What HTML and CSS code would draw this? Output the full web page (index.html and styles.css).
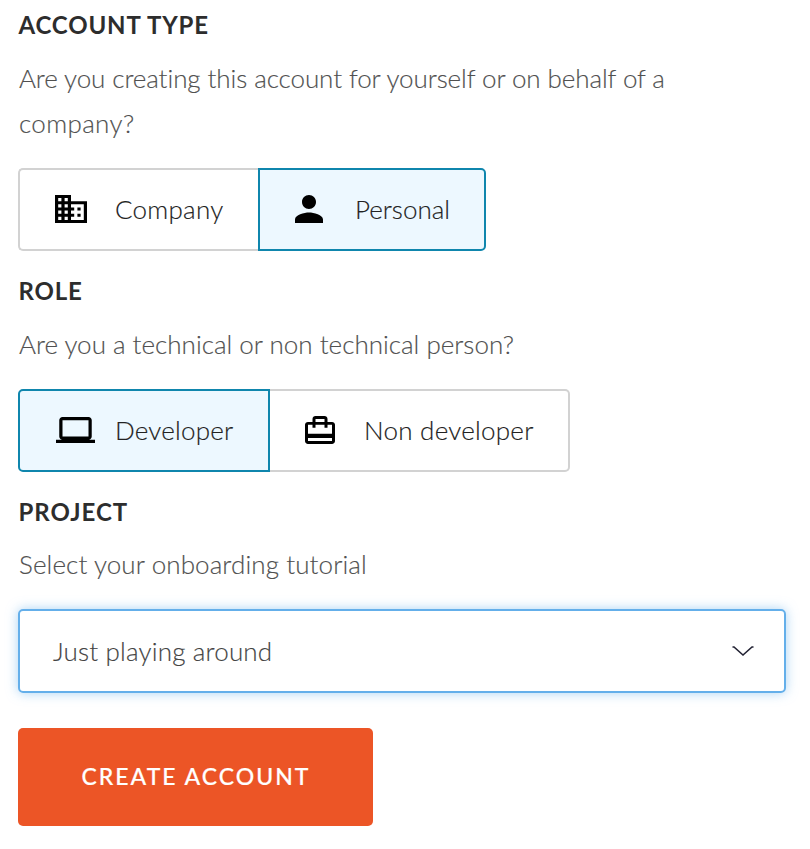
FILE: index.html
```
<!DOCTYPE html>
<html lang="en">
<head>
<meta charset="utf-8">
<title>Create account</title>
<link rel="stylesheet" href="styles.css">
</head>
<body>
<form class="signup">
  <section class="group">
    <h2 class="t-account">ACCOUNT TYPE</h2>
    <p><span class="t-q1">Are you creating this account for yourself or on behalf of a</span><br><span class="t-q2">company?</span></p>
    <div class="options">
      <div class="option company">
        <svg class="icon" width="32" height="28" viewBox="2 3 20 18" preserveAspectRatio="none"><path d="M12 7V3H2v18h20V7H12zM6 19H4v-2h2v2zm0-4H4v-2h2v2zm0-4H4V9h2v2zm0-4H4V5h2v2zm4 12H8v-2h2v2zm0-4H8v-2h2v2zm0-4H8V9h2v2zm0-4H8V5h2v2zm10 12h-8v-2h2v-2h-2v-2h2v-2h-2V9h8v10zm-2-8h-2v2h2v-2zm0 4h-2v2h2v-2z"/></svg>
        <span class="t-company">Company</span>
      </div>
      <div class="option personal selected">
        <svg class="icon" width="28" height="28" viewBox="4 4 16 16"><path d="M12 12c2.210 0 4-1.790 4-4s-1.790-4-4-4-4 1.790-4 4 1.790 4 4 4zm0 2c-2.670 0-8 1.340-8 4v2h16v-2c0-2.660-5.330-4-8-4z"/></svg>
        <span class="t-personal">Personal</span>
      </div>
    </div>
  </section>
  <section class="group">
    <h2 class="t-role">ROLE</h2>
    <p><span class="t-q3">Are you a technical or non technical person?</span></p>
    <div class="options">
      <div class="option developer selected">
        <svg class="icon" width="39" height="26" viewBox="0 4 24 16" preserveAspectRatio="none"><path d="M20 18c1.100 0 1.990-.9 1.990-2L22 6c0-1.100-.9-2-2-2H4c-1.100 0-2 .9-2 2v10c0 1.100.9 2 2 2H0v2h24v-2h-4zM4 6h16v10H4V6z"/></svg>
        <span class="t-dev">Developer</span>
      </div>
      <div class="option nondev">
        <svg class="icon" width="30" height="28" viewBox="2 2 20 19" preserveAspectRatio="none"><path d="M20 6h-3V4c0-1.110-.89-2-2-2H9c-1.110 0-2 .89-2 2v2H4c-1.110 0-2 .89-2 2v11c0 1.110.89 2 2 2h16c1.110 0 2-.89 2-2V8c0-1.110-.89-2-2-2zM9 4h6v2H9V4zm11 15H4v-2h16v2zm0-5H4V8h3v2h2V8h6v2h2V8h3v6z"/></svg>
        <span class="t-nondev">Non developer</span>
      </div>
    </div>
  </section>
  <section class="group project">
    <h2 class="t-project">PROJECT</h2>
    <p><span class="t-q4">Select your onboarding tutorial</span></p>
    <div class="select">
      <span class="t-select">Just playing around</span>
      <svg class="chevron" width="22" height="12" viewBox="0 0 22 12"><path d="M.5 2H2L11 10l9-8h1.500"/></svg>
    </div>
  </section>
  <button type="button" class="submit"><span class="t-create">CREATE ACCOUNT</span></button>
</form>
</body>
</html>
```
FILE: styles.css
```
* { box-sizing: border-box; }
body { margin: 0; background: #fff; color: #2d2d2d; font-family: Lato, sans-serif; }
.signup { padding: 2px 24px 0 18px; }
.group { margin-bottom: 17px; }
h2 { margin: 0; height: 46px; padding-left: .5px; line-height: 46px; font-size: 24px; font-weight: 700; letter-spacing: .85px; }
p { margin: 8px 0 22px; padding-left: 1px; font-size: 26px; line-height: 45px; font-weight: 300; color: #505050; -webkit-text-stroke: .15px; }
.options { display: flex; height: 83px; }
.option { display: flex; align-items: center; padding-bottom: 2px; border: 2px solid #d2d2d2; font-size: 26px; font-weight: 300; color: #222; white-space: nowrap; -webkit-text-stroke: .15px; }
.option:first-child { border-radius: 5px 0 0 5px; }
.option:last-child { border-radius: 0 5px 5px 0; }
.option.selected { background: #edf8ff; border-color: #0f86ad; }
.icon { flex: none; fill: #000; }
.company { width: 240px; border-right: 0; padding-left: 35px; }
.company .icon { margin-right: 28px; }
.personal { width: 228px; padding-left: 35px; }
.personal .icon { margin-right: 32px; }
.developer { width: 252px; padding-left: 36px; }
.developer .icon { margin-right: 20px; }
.nondev { width: 300px; border-left: 0; padding-left: 35px; }
.nondev .icon { margin-right: 29px; }
.project { margin-bottom: 35px; }
.project p { margin: 7px 0 22px; }
.select { display: flex; align-items: center; justify-content: space-between; height: 84px; padding: 0 30px 0 33px; border: 2px solid #64afea; border-radius: 5px; box-shadow: 0 0 12px rgba(100, 175, 234, .55); color: #444; font-size: 26px; font-weight: 300; -webkit-text-stroke: .15px; }
.chevron { fill: none; stroke: #222233; stroke-width: 1.6; }
.submit { display: flex; align-items: center; justify-content: center; width: 355px; height: 98px; padding: 0 0 2px 1px; border: 0; border-radius: 5px; background: #ec5526; color: #fff; font: 500 23px Lato, sans-serif; -webkit-text-stroke: .2px; }
.t-q1 { letter-spacing: -.09px; }
.t-q2 { letter-spacing: .35px; }
.t-q4 { letter-spacing: .1px; }
.t-company { letter-spacing: .25px; }
.t-dev { letter-spacing: .2px; }
.t-nondev { letter-spacing: .25px; }
.t-project { letter-spacing: 1px; }
.t-select { letter-spacing: .17px; }
.t-create { letter-spacing: 2px; }
```
